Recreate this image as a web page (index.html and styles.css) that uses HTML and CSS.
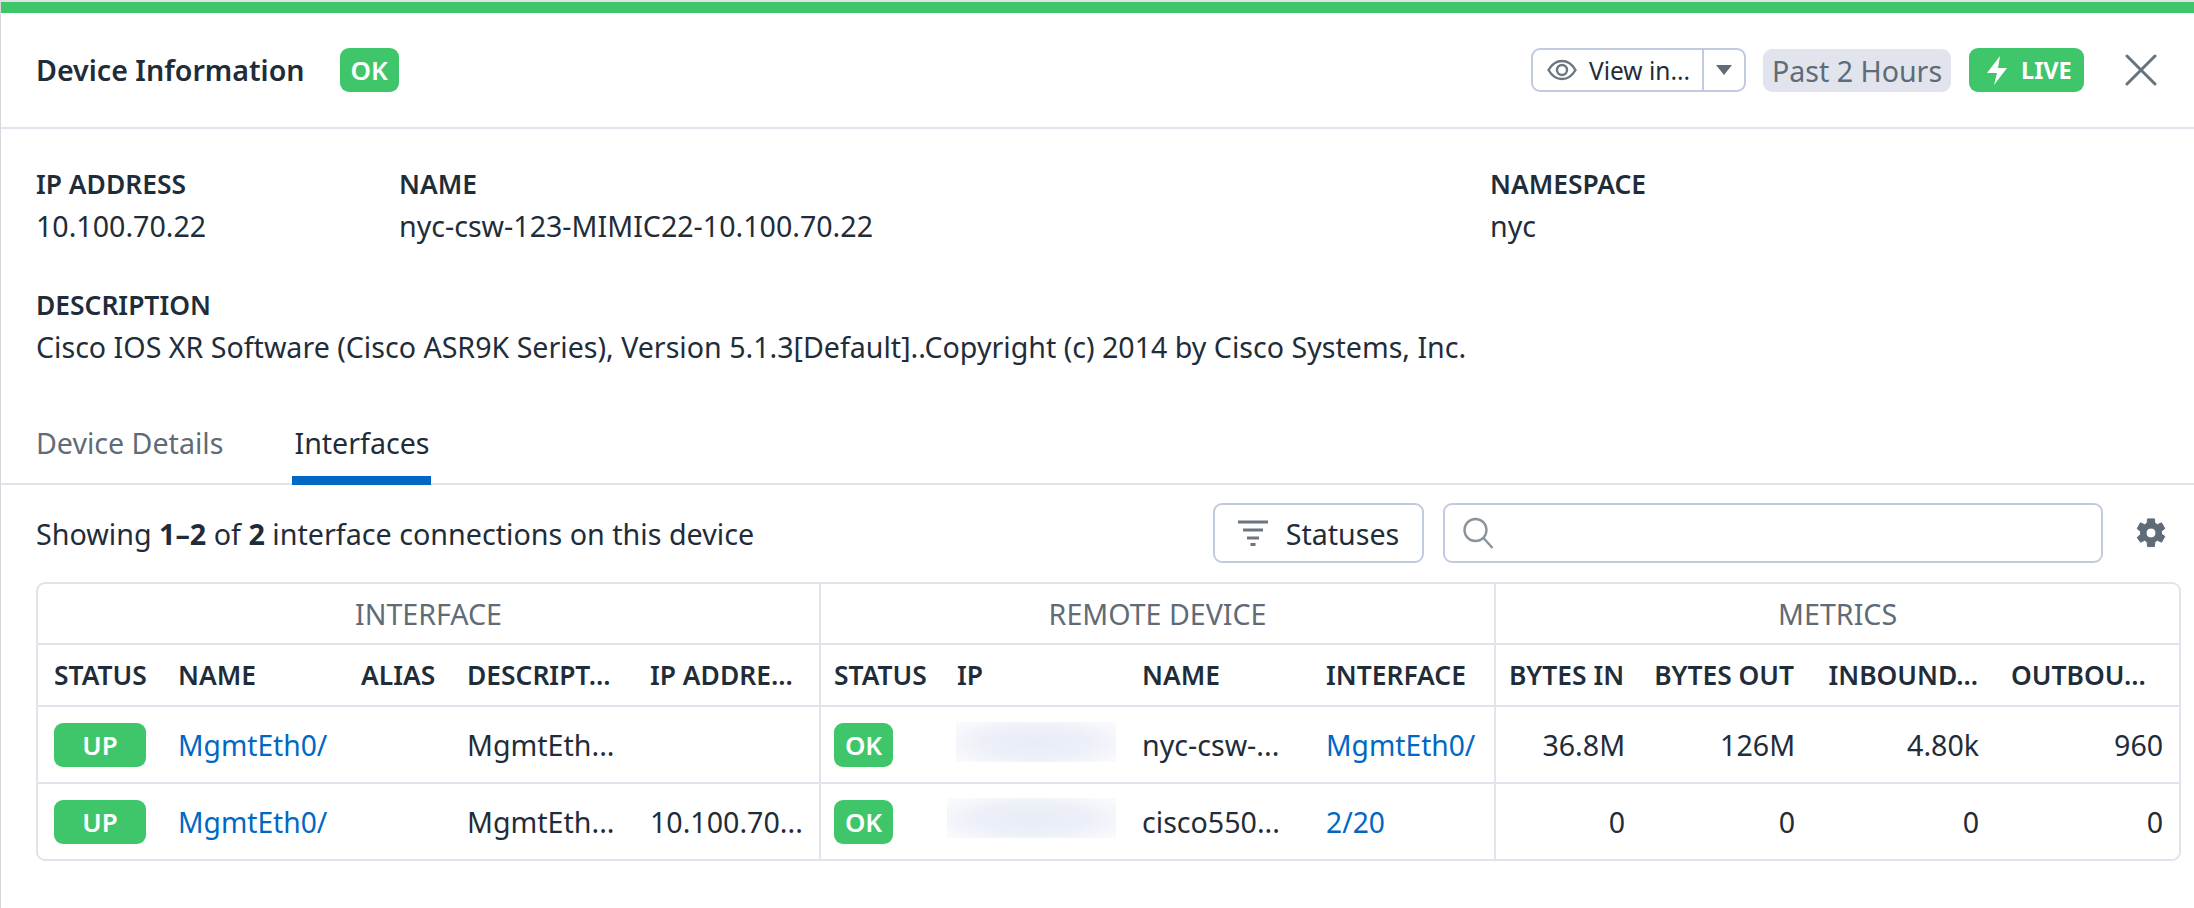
FILE: index.html
```html
<!DOCTYPE html>
<html lang="en">
<head>
<meta charset="utf-8">
<title>Device Information</title>
<link rel="stylesheet" href="styles.css">
</head>
<body>
<div class="panel">
  <header class="header">
    <h1 class="title">Device Information</h1>
    <span class="badge badge-ok title-badge">OK</span>
    <div class="header-actions">
      <div class="split-btn">
        <button class="split-main">
          <svg class="eye" viewBox="0 0 30 24" width="30" height="24"><path d="M1.5 12C5 6 9.500 3 15 3s10 3 13.500 9C25 18 20.500 21 15 21S5 18 1.500 12z" fill="none" stroke="#6b7680" stroke-width="2.400"/><circle cx="15" cy="12" r="5" fill="none" stroke="#6b7680" stroke-width="2.400"/></svg>
          <span>View in...</span>
        </button>
        <button class="split-caret"><svg viewBox="0 0 16 10" width="16" height="10"><path d="M0 0h16L8 10z" fill="#5f6b76"/></svg></button>
      </div>
      <span class="time-pill">Past 2 Hours</span>
      <span class="live-pill">
        <svg viewBox="0 0 20 29" width="20" height="29"><path d="M13 0L0 17h10L7 29 20 12h-9z" fill="#fff"/></svg>
        LIVE
      </span>
      <button class="close"><svg viewBox="0 0 32 32" width="32" height="32"><path d="M2 2l28 28M30 2L2 30" stroke="#66727c" stroke-width="3" stroke-linecap="round" fill="none"/></svg></button>
    </div>
  </header>

  <section class="fields">
    <div class="field"><div class="label">IP ADDRESS</div><div class="value">10.100.70.22</div></div>
    <div class="field"><div class="label">NAME</div><div class="value">nyc-csw-123-MIMIC22-10.100.70.22</div></div>
    <div class="field"><div class="label">NAMESPACE</div><div class="value">nyc</div></div>
    <div class="field field-wide"><div class="label">DESCRIPTION</div><div class="value">Cisco IOS XR Software (Cisco ASR9K Series), Version 5.1.3[Default]..Copyright (c) 2014 by Cisco Systems, Inc.</div></div>
  </section>

  <nav class="tabs">
    <a class="tab">Device Details</a>
    <a class="tab tab-active">Interfaces</a>
  </nav>

  <div class="toolbar">
    <div class="summary">Showing <b>1–2</b> of <b>2</b> interface connections on this device</div>
    <button class="filter-btn">
      <svg viewBox="0 0 30 26" width="30" height="26"><path d="M0 2h30M5 10h20M9 18h12M12.500 24.500h5" stroke="#6b7680" stroke-width="3" fill="none"/></svg>
      Statuses
    </button>
    <div class="search">
      <svg viewBox="0 0 32 32" width="32" height="32"><circle cx="13.500" cy="13" r="11" fill="none" stroke="#8a949d" stroke-width="2.400"/><path d="M21.500 21l9 10" stroke="#8a949d" stroke-width="2.400" fill="none"/></svg>
    </div>
    <button class="gear">
      <svg viewBox="0 0 30 30" width="30" height="30"><path fill="#5f6b76" stroke="#5f6b76" stroke-width="1" stroke-linejoin="round" fill-rule="evenodd" d="M11.600 .9h6.800l.5 4.400 2.600 1.400 4-1.900 3.300 5.800-3.400 2.400v3l3.400 2.400-3.300 5.800-4-1.900-2.600 1.400-.5 4.900h-6.800l-.5-4.900-2.600-1.400-4 1.900L1.200 19.400l3.400-2.900v-3L1.200 10.600 4.500 4.800l4 1.900 2.600-1.400zM15 10a5 5 0 1 0 0 10 5 5 0 0 0 0-10z"/></svg>
    </button>
  </div>

  <div class="table-wrap">
    <table class="grid">
      <colgroup>
        <col class="c-125"><col class="c-183"><col class="c-106"><col class="c-183"><col class="c-186">
        <col class="c-121"><col class="c-185"><col class="c-184"><col class="c-185">
        <col class="c-146"><col class="c-170"><col class="c-184"><col class="c-184">
      </colgroup>
      <thead>
        <tr class="group-row">
          <th colspan="5" class="sep">INTERFACE</th>
          <th colspan="4" class="sep">REMOTE DEVICE</th>
          <th colspan="4">METRICS</th>
        </tr>
        <tr class="head-row">
          <th>STATUS</th><th>NAME</th><th>ALIAS</th><th>DESCRIPT...</th><th class="sep">IP ADDRE...</th>
          <th class="tight">STATUS</th><th>IP</th><th>NAME</th><th class="sep">INTERFACE</th>
          <th class="num">BYTES IN</th><th class="num">BYTES OUT</th><th class="num">INBOUND...</th><th>OUTBOU...</th>
        </tr>
      </thead>
      <tbody>
        <tr>
          <td><span class="badge badge-up">UP</span></td>
          <td><a class="link">MgmtEth0/</a></td>
          <td></td>
          <td>MgmtEth...</td>
          <td class="sep"></td>
          <td class="tight"><span class="badge badge-ok">OK</span></td>
          <td><div class="redact redact-a"></div></td>
          <td>nyc-csw-...</td>
          <td class="sep"><a class="link">MgmtEth0/</a></td>
          <td class="num">36.8M</td><td class="num">126M</td><td class="num">4.80k</td><td class="num">960</td>
        </tr>
        <tr>
          <td><span class="badge badge-up">UP</span></td>
          <td><a class="link">MgmtEth0/</a></td>
          <td></td>
          <td>MgmtEth...</td>
          <td class="sep">10.100.70...</td>
          <td class="tight"><span class="badge badge-ok">OK</span></td>
          <td><div class="redact redact-b"></div></td>
          <td>cisco550...</td>
          <td class="sep"><a class="link">2/20</a></td>
          <td class="num">0</td><td class="num">0</td><td class="num">0</td><td class="num">0</td>
        </tr>
      </tbody>
    </table>
  </div>
</div>
</body>
</html>
```

FILE: styles.css
```css
* { box-sizing: border-box; }
html, body { margin: 0; padding: 0; background: #fff; }
body {
  font-family: "Noto Sans", "Open Sans", sans-serif;
  font-size: 28.600px;
  color: #1f2d3a;
  height: 908px;
  overflow: hidden;
}
button { font: inherit; color: inherit; background: none; border: 0; padding: 0; }

.panel {
  height: 908px;
  border-left: 1px solid #d6d8dc;
  border-top: 2px solid #dfe1e3;
}

.header {
  height: 127px;
  border-top: 11px solid #3fc66a;
  border-bottom: 2px solid #e2e4ed;
  padding: 0 0 0 35px;
  display: flex;
  align-items: center;
}
.title { margin: 0; font-size: 28.600px; font-weight: 600; line-height: 40px; }
.badge {
  display: inline-flex;
  align-items: center;
  justify-content: center;
  height: 44px;
  width: 59px;
  border-radius: 9px;
  background: #3fc66a;
  color: #fff;
  font-size: 26px;
  font-weight: 600;
}
.title-badge { margin-left: 35px; }
.header-actions { margin-left: auto; display: flex; align-items: center; padding-right: 37px; }

.split-btn {
  display: flex;
  width: 215px;
  height: 44px;
  border: 2px solid #c2cae0;
  border-radius: 9px;
}
.split-main {
  flex: 1;
  display: flex;
  align-items: center;
  gap: 12px;
  padding-left: 14px;
  font-size: 24.500px;
  border-right: 2px solid #c2cae0;
}
.split-caret { width: 40px; display: flex; align-items: center; justify-content: center; }
.time-pill {
  margin-left: 17px;
  height: 43px;
  width: 188px;
  display: flex;
  align-items: center;
  justify-content: center;
  background: #e1e4ed;
  color: #5f6b76;
  border-radius: 9px;
  font-size: 28.600px;
}
.live-pill {
  margin-left: 18px;
  height: 44px;
  width: 115px;
  display: flex;
  align-items: center;
  gap: 14px;
  padding-left: 18px;
  background: #3fc66a;
  color: #fff;
  border-radius: 9px;
  font-size: 23.500px;
  font-weight: 700;
}
.close { margin-left: 41px; width: 32px; height: 32px; display: flex; }

.fields {
  display: grid;
  grid-template-columns: 363px 1091px 1fr;
  row-gap: 3px;
  padding: 35px 0 0 35px;
  height: 274px;
}
.field-wide { grid-column: 1 / -1; }
.label { font-size: 26.400px; font-weight: 600; line-height: 41px; }
.value { font-size: 28.600px; line-height: 42px; white-space: nowrap; }

.tabs {
  height: 82px;
  display: flex;
  border-bottom: 2px solid #e2e4ed;
  padding-left: 35px;
  gap: 71px;
}
.tab { color: #5f6b76; line-height: 42px; padding-top: 19px; height: 82px; }
.tab-active { color: #1f2d3a; border-bottom: 9px solid #0068c4; margin: 0 -2px; padding: 19px 1px 0 2px; }

.toolbar {
  display: flex;
  align-items: center;
  height: 97px;
  padding: 0 0 1px 35px;
}
.summary { font-size: 28.700px; flex: 1; white-space: nowrap; }
.summary b { font-weight: 700; }
.filter-btn {
  width: 211px;
  height: 60px;
  border: 2px solid #c2cae0;
  border-radius: 9px;
  display: flex;
  align-items: center;
  justify-content: center;
  gap: 18px;
}
.search {
  margin-left: 19px;
  width: 660px;
  height: 60px;
  border: 2px solid #c2cae0;
  border-radius: 9px;
  display: flex;
  align-items: center;
  padding-left: 17px;
}
.gear { margin-left: 33px; margin-right: 28px; width: 30px; height: 30px; display: flex; }

.table-wrap {
  margin: 0 13px 0 35px;
  border: 2px solid #e2e4ed;
  border-radius: 9px;
  overflow: hidden;
}
.grid {
  table-layout: fixed;
  width: 100%;
  border-collapse: collapse;
}
.c-125 { width: 124px; }
.c-183 { width: 183px; }
.c-106 { width: 106px; }
.c-186 { width: 186px; }
.c-121 { width: 121px; }
.c-185 { width: 185px; }
.c-184 { width: 184px; }
.c-146 { width: 146px; }
.c-170 { width: 170px; }
.grid th, .grid td {
  padding: 0 16px;
  white-space: nowrap;
  overflow: hidden;
  text-align: left;
}
.group-row th {
  height: 60px;
  border-bottom: 2px solid #e2e4ed;
  text-align: center;
  font-size: 28.600px;
  font-weight: 400;
  color: #5f6b76;
}
.head-row th {
  height: 62px;
  border-bottom: 2px solid #e2e4ed;
  font-size: 26.400px;
  font-weight: 600;
}
.grid td { height: 77px; font-size: 28.600px; border-bottom: 2px solid #e2e4ed; }
.grid tbody tr:last-child td { border-bottom: 0; height: 76px; }
.grid .sep { border-right: 2px solid #e2e4ed; }
.grid .num { text-align: right; }
.grid th.num { padding: 0 17px 0 6px; }
.grid .tight { padding-left: 13px; }
.link { color: #0068c4; font-size: 28.200px; }
.badge-up { width: 92px; height: 44px; }
.grid .badge { vertical-align: middle; }
.redact {
  height: 40px;
  background: radial-gradient(ellipse 62% 70% at 50% 52%, #e8ecf5 0%, #edf0f8 55%, #f7f8fc 90%, #f9fafd 100%);
}
.redact-a { width: 160px; margin: 0 0 6px -1px; }
.redact-b { width: 169px; margin: 0 0 7px -10px; }
```
